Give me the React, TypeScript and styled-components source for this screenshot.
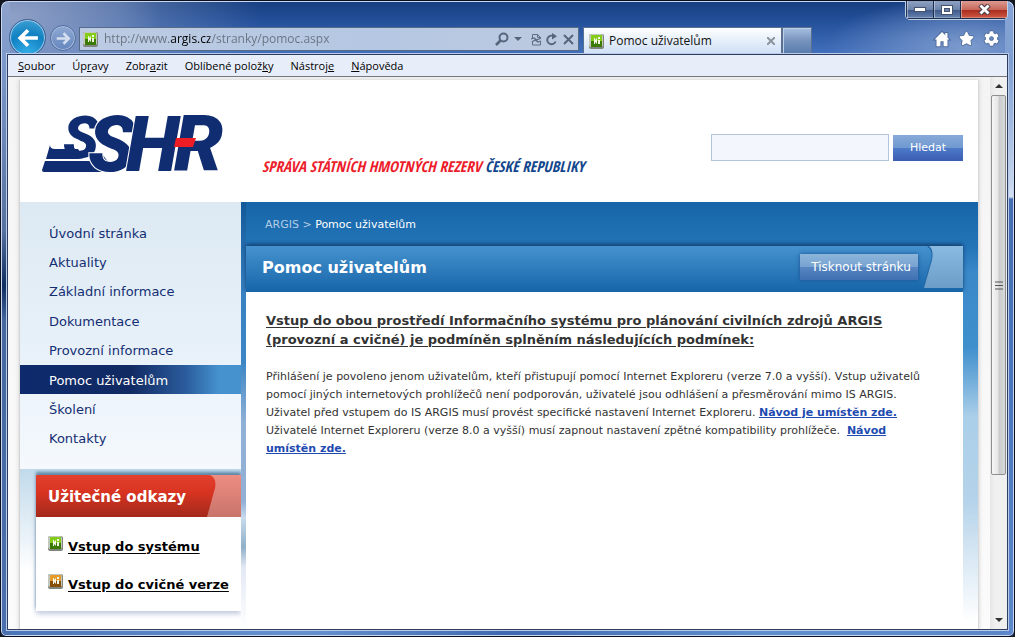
import React from "react";
import styled, { createGlobalStyle } from "styled-components";
import { FaStar, FaCog } from "react-icons/fa";

const ui = `"Open Sans", "Noto Sans", sans-serif`;
const web = `"DejaVu Sans", sans-serif`;
const narrow = `"Open Sans Condensed", "Roboto Condensed", "Liberation Sans", sans-serif`;

const GlobalStyle = createGlobalStyle`
  * { box-sizing: border-box; }
  body { margin: 0; background: #15171f; font-family: ${web}; }
  button, input { font: inherit; margin: 0; padding: 0; border: 0; background: none; color: inherit; }
  ul { list-style: none; margin: 0; padding: 0; }
  h1, h2, p { margin: 0; }
`;

/* ---------- browser window ---------- */

const Window = styled.div`
  height: 100vh;
  display: flex;
  flex-direction: column;
  padding: 0 6px 6px;
  border: 1px solid #0b1020;
  border-radius: 8px 8px 6px 6px;
  box-shadow: inset 0 0 0 1px #c9d8ef;
  background:
    linear-gradient(180deg, #86a3d4 0, #7f9fd2 60px, #c3d3ec 180px, #d4e0f2 196px, #456db3 198px, #4c77bf 400px, #5d88cb 100%) right / 9px 100% no-repeat,
    linear-gradient(180deg, #8ea3cb 0, #7d99cb 60px, #56709f 230px, #0f2d60 285px, #46689f 320px, #4c70ae 100%) left / 9px 100% no-repeat,
    linear-gradient(90deg, #4a76b9, #6592cf 30%, #3f69b0 50%, #5f8fcd 75%, #5a86c8) bottom / 100% 9px no-repeat,
    radial-gradient(140px 50px at 965px 46px, #7d9bcd, transparent),
    radial-gradient(150px 70px at 10px 16px, #8ea0c6, transparent),
    linear-gradient(90deg, #8197c299 0, #8197c288 120px, transparent 260px),
    linear-gradient(180deg, #173f80 0, #24509a 20px, #4371bd 54px);
`;

const Chrome = styled.header`
  flex: none;
  height: 53px;
  display: flex;
  align-items: flex-end;
  padding-left: 2px;
`;

const BackButton = styled.button`
  flex: none;
  width: 37px;
  height: 37px;
  margin-bottom: -2px;
  border: 1px solid #3c5f95;
  border-radius: 50%;
  background: radial-gradient(circle at 50% 100%, #35b1ea, #1181c2 55%, #3d9fd3 90%);
  box-shadow: inset 0 0 0 1px #a4cbe8;
  display: grid;
  place-items: center;
`;

const ForwardButton = styled(BackButton)`
  width: 26px;
  height: 26px;
  margin: 0 3px 3px 4px;
  border-color: #52719f;
  background: linear-gradient(#8fa9d2, #6586be);
  box-shadow: inset 0 0 0 1px #a9bedf;
`;

const AddressBar = styled.div`
  flex: 1;
  height: 24px;
  margin-bottom: 3px;
  display: flex;
  align-items: center;
  gap: 4px;
  padding: 0 3px;
  border: 1px solid #566b8a;
  background: linear-gradient(90deg, #bccbe3, #b5c7e2 60%, #bccae0);
`;

const AddressInput = styled.input`
  flex: 1;
  min-width: 0;
  height: 20px;
  padding-left: 2px;
  outline: 0;
  font: 12px/20px ${ui};
  color: transparent;
  background: linear-gradient(90deg, #68727f 68px, #000 68px, #000 108px, #68727f 108px);
  background-clip: text;
  -webkit-background-clip: text;
`;

const GlyphButton = styled.button`
  flex: none;
  width: 14px;
  height: 16px;
  display: grid;
  place-items: center;
`;

const AddressTools = styled.div`
  display: flex;
  gap: 2px;
`;

const Tab = styled.div`
  flex: none;
  width: 199px;
  height: 27px;
  margin-left: 4px;
  display: flex;
  align-items: center;
  gap: 5px;
  padding: 0 3px 0 5px;
  border: 1px solid #5b6f90;
  border-bottom: 0;
  background: linear-gradient(#fdfeff, #dce8f8 70%, #d0e0f6);
`;

const TabLabel = styled.button`
  flex: 1;
  text-align: left;
  font: 12px/20px ${ui};
  color: #111;
`;

const NewTab = styled.button`
  flex: none;
  width: 30px;
  height: 27px;
  border: 1px solid #5b6f90;
  border-bottom: 0;
  background: linear-gradient(#a7bfe0, #7592bd 50%, #587cae);
  box-shadow: inset 1px 1px 0 #bdd0ea;
`;

const Corner = styled.div`
  flex: none;
  width: 196px;
  height: 100%;
  display: flex;
  flex-direction: column;
  align-items: flex-end;
  justify-content: space-between;
`;

const WindowButtons = styled.div`
  display: flex;
  border: 1px solid #c2d0e6;
  border-top: 0;
  border-radius: 0 0 5px 5px;
  overflow: hidden;
`;

const WindowButton = styled.button<{ $close?: boolean }>`
  width: ${(p) => (p.$close ? 47 : 27)}px;
  height: 18px;
  display: grid;
  place-items: center;
  border: 1px solid #1d2f4e;
  border-width: 0 0 1px 1px;
  box-shadow: inset 1px 0 0 #ffffff66, inset 0 -1px 0 #ffffff44;
  background: ${(p) =>
    p.$close
      ? "linear-gradient(#dc9a90, #c9695c 50%, #a82a1b 52%, #cf5a45)"
      : "linear-gradient(#8fa2c2, #6d84ab 50%, #3d5887 52%, #6682b0)"};
`;

const Tools = styled.div`
  display: flex;
  gap: 8px;
  padding: 0 8px 7px 0;
`;

const ToolButton = styled.button`
  width: 17px;
  height: 17px;
  display: grid;
  place-items: center;
  color: #fff;
  svg { overflow: visible; stroke: #4d6a9b; stroke-width: 60px; paint-order: stroke; }
`;

const Frame = styled.div`
  flex: 1;
  min-height: 0;
  display: flex;
  flex-direction: column;
  border: 1px solid #2c3d60;
  box-shadow: 0 0 0 1px #b9cbe8;
  position: relative;
`;

const MenuBar = styled.nav`
  flex: none;
  height: 22px;
  display: flex;
  gap: 17px;
  padding-left: 10px;
  background: #e7eefa;
  border-bottom: 1px solid #74777c;
`;

const MenuItem = styled.button`
  font: 11px/20px ${ui};
  color: #000;
`;

const View = styled.div`
  flex: 1;
  min-height: 0;
  display: flex;
`;

const ScrollBar = styled.div`
  flex: none;
  width: 17px;
  display: flex;
  flex-direction: column;
  background: linear-gradient(90deg, #e6e6e6, #f0f0f0 30%, #efefef);
`;

const ScrollButton = styled.button`
  height: 18px;
  display: grid;
  place-items: center;
`;

const Thumb = styled.div`
  width: 15px;
  height: 380px;
  margin: 0 1px;
  display: grid;
  place-items: center;
  border: 1px solid #8f8f8f;
  border-radius: 2px;
  background: linear-gradient(90deg, #f6f6f6, #e6e6e6 45%, #c9cacc 55%, #d9dadb);
`;

const Push = styled.div`
  flex: 1;
`;

/* ---------- page ---------- */

const Page = styled.div`
  flex: 1;
  min-width: 0;
  overflow: hidden;
  display: flex;
  padding: 3px 11px 0;
  background: linear-gradient(#f4f4f4, #fbfbfb);
`;

const Sheet = styled.div`
  flex: 1;
  min-width: 0;
  display: flex;
  flex-direction: column;
  border-left: 1px solid #d4d4d4;
  border-right: 1px solid #d9d9d9;
  box-shadow: 0 0 4px #cfcfcf;
  background: #fff;
`;

const Banner = styled.header`
  flex: none;
  height: 122px;
  display: flex;
  align-items: flex-start;
  padding: 34px 15px 0 22px;
`;

const Tagline = styled.p`
  flex: 1;
  margin: 42px 0 0 36px;
  font: italic bold 15px/20px ${narrow};
  color: #ec1c2b;
  white-space: nowrap;
  b { color: #12468c; }
`;

const Search = styled.form`
  display: flex;
  gap: 4px;
  margin-top: 20px;
`;

const SearchInput = styled.input`
  width: 178px;
  height: 27px;
  padding: 0 6px;
  border: 1px solid #b1c6dc;
  background: #f3f7fd;
  font-size: 11px;
`;

const SearchButton = styled.button`
  width: 70px;
  height: 26px;
  margin-top: 1px;
  font: 11px/26px ${web};
  color: #fff;
  background: linear-gradient(#86a9d8, #7199d0 50%, #4d7bc8 50%, #3b5cb2);
`;

const Columns = styled.div`
  flex: 1;
  min-height: 0;
  display: flex;
  overflow: hidden;
`;

const Sidebar = styled.aside`
  flex: none;
  width: 221px;
  background: linear-gradient(#c1daeb 267px, #fff 370px);
`;

const NavPanel = styled.nav`
  height: 267px;
  padding-top: 16px;
  background: linear-gradient(#dde9f2, #e6f0f9 130px, #f5f9fd);
`;

const NavList = styled.ul`
  height: 235px;
  display: flex;
  flex-direction: column;
`;

const NavItem = styled.li<{ $active?: boolean }>`
  flex: 1;
  display: flex;
  align-items: center;
  padding: 1px 0 0 29px;
  font-size: 13px;
  color: ${(p) => (p.$active ? "#fff" : "#142e73")};
  background: ${(p) =>
    p.$active ? "linear-gradient(90deg, #0d2a6c, #112a63 50%, #2b5c9c 75%, #4592cf 90%)" : "none"};
  a { color: inherit; text-decoration: none; }
`;

const LinksBox = styled.section`
  margin: 6px 0 0 16px;
  height: 136px;
  background: #fff;
  box-shadow: 0 -3px 3px #5f87a6, 0 3px 5px #c3cbe0;
`;

const LinksHead = styled.div`
  height: 42px;
  display: flex;
  position: relative;
  background: linear-gradient(#ee8d82, #c8746b);
`;

const LinksTitle = styled.h2`
  position: relative;
  padding-left: 12px;
  font: bold 15px/44px ${web};
  color: #fff;
`;

const HeadShape = styled.svg`
  position: absolute;
  inset: 0 auto auto 0;
`;

const QuickLinks = styled.ul`
  display: flex;
  flex-direction: column;
  gap: 18px;
  padding: 19px 0 0 12px;
`;

const QuickLink = styled.li`
  display: flex;
  gap: 5px;
  font: bold 13px/18px ${web};
  white-space: nowrap;
  a { color: #000; padding-top: 2px; text-underline-offset: 2px; }
`;

const Main = styled.main`
  flex: 1;
  min-width: 0;
  display: flex;
  flex-direction: column;
  padding: 0 15px 0 5px;
  background:
    linear-gradient(180deg, #13599a 0, #3881c2 90px, #3c86c6 160px, #8fb0d6 220px, #93b0d4 300px, #c8dbed 316px, #8fb0c8 345px, #e3e8f5 365px, #fff) left / 5px 100% no-repeat,
    linear-gradient(180deg, #1565a8 0, #2475b8 45px, #3a88c8 70px, #3f8fcd 145px, #abcfe9 215px, #b5d3ea 300px, #d2e4f2 345px, #fff 420px);
`;

const Crumbs = styled.nav`
  flex: none;
  height: 44px;
  padding-left: 19px;
  font: 11px/45px ${web};
  color: #fff;
  a, span { color: #b3cde5; text-decoration: none; }
`;

const TitleBar = styled.div`
  flex: none;
  height: 46px;
  display: flex;
  align-items: center;
  padding-left: 16px;
  background: linear-gradient(#4592cf, #2f7cbc 50%, #1565a8);
  box-shadow: 0 -2px 4px #123f70;
`;

const Title = styled.h1`
  flex: 1;
  font: bold 16px/42px ${web};
  color: #fff;
  padding-bottom: 3px;
`;

const PrintButton = styled.button`
  width: 118px;
  height: 26px;
  margin: 0 6px 4px 0;
  padding-left: 4px;
  font: 12px/24px ${web};
  color: #fff;
  white-space: nowrap;
  background: linear-gradient(#8cb5da, #78a3d0 50%, #5886c2 50%, #4070b2);
  box-shadow: 0 0 4px #1b4f90;
`;

const TitleFold = styled.svg`
  flex: none;
  align-self: flex-start;
`;

const Article = styled.article`
  flex: 1;
  padding: 19px 40px 19px 20px;
  background: #fff;
  color: #333;
`;

const Lead = styled.h2`
  font: bold 13px/19px ${web};
  text-decoration: underline;
  text-underline-offset: 2px;
`;

const Text = styled.p`
  margin-top: 19px;
  font: 11px/18px ${web};
  a { font-weight: bold; color: #1f4bb0; }
`;

/* ---------- small drawings ---------- */

const IconSvg = styled.svg`
  flex: none;
`;

const SiteIcon = ({ tone = "green" }: { tone?: "green" | "orange" }) => {
  const [top, bottom] = tone === "green" ? ["#84cc1a", "#3c7a06"] : ["#e59a2a", "#8a4f06"];
  return (
    <IconSvg width="15" height="15" viewBox="0 0 15 15" aria-hidden="true">
      <rect width="15" height="15" rx="2" fill="#7f857c" />
      <rect width="14" height="13" rx="2" fill="#c3c8bc" />
      <rect x="2" y="1" width="11" height="7" fill={top} />
      <rect x="2" y="7" width="11" height="6" fill={bottom} />
      <path d="M5 4h1v2l2-2v6L6 8v2H5zM9 3h2v2H9zM9 6h2v4H9z" fill="#f2f7e6" />
    </IconSvg>
  );
};

const Arrow = ({ size, flip, color }: { size: number; flip?: boolean; color: string }) => (
  <svg width={size} height={size} viewBox="0 0 20 20" fill="none" stroke={color} strokeWidth="3.4" aria-hidden="true">
    {flip ? <path d="M1 10h16M10 3l7 7-7 7" /> : <path d="M19 10H3M10 3l-7 7 7 7" />}
  </svg>
);

const LogoSvg = styled.svg`
  flex: none;
  overflow: visible;
  font: italic 900 78px Roboto, "Liberation Sans", sans-serif;
`;

const Logo = () => (
  <LogoSvg width="184" height="60" viewBox="0 0 184 60" role="img" aria-label="SSHR">
    <g fill="#112d72" stroke="#fff" strokeWidth="2" paintOrder="stroke">
      <text x="21" y="44" fontSize="59">S</text>
      <path d="M8 31Q8 35 13 35H36L42 44L36 45H4Z" stroke="none" />
      <path d="M3 47H48Q56 46 60 40L74 58H2Q0 58 0 56Z" stroke="none" />
      <text x="46" y="57">S</text>
      <text x="84" y="57">H</text>
      <text x="132" y="57">R</text>
    </g>
    <path d="M134 24H154L151 33H132Z" fill="#ee1c25" />
  </LogoSvg>
);

const navItems = [
  "Úvodní stránka",
  "Aktuality",
  "Základní informace",
  "Dokumentace",
  "Provozní informace",
  "Pomoc uživatelům",
  "Školení",
  "Kontakty",
];

const menus: [string, string, string][] = [
  ["", "S", "oubor"],
  ["Úp", "r", "avy"],
  ["Zobr", "a", "zit"],
  ["Oblíbené polož", "k", "y"],
  ["Nástroj", "e", ""],
  ["", "N", "ápověda"],
];

export default function App() {
  return (
    <>
      <GlobalStyle />
      <Window>
        <Chrome>
          <BackButton aria-label="Zpět"><Arrow size={22} color="#fff" /></BackButton>
          <ForwardButton aria-label="Vpřed"><Arrow size={15} flip color="#d3deef" /></ForwardButton>
          <AddressBar>
            <SiteIcon />
            <AddressInput aria-label="Adresa" defaultValue="http://www.argis.cz/stranky/pomoc.aspx" />
            <AddressTools>
              <GlyphButton aria-label="Hledat na webu">
                <svg width="14" height="14" viewBox="0 0 14 14" fill="none" stroke="#56657c" strokeWidth="2"><circle cx="8.5" cy="5.5" r="4" /><path d="M5.5 8.5L1 13" strokeWidth="2.6" /></svg>
              </GlyphButton>
              <GlyphButton aria-label="Možnosti hledání">
                <svg width="8" height="4" viewBox="0 0 8 4"><path d="M0 0h8L4 4z" fill="#56657c" /></svg>
              </GlyphButton>
            </AddressTools>
            <AddressTools>
              <GlyphButton aria-label="Kompatibilní zobrazení">
                <svg width="11" height="13" viewBox="0 0 11 13" fill="none" stroke="#5f6e85"><path d="M1.500 5V1.500h5l3 3V5M1.500 8v4h8V8M6.500 1.500v3h3" /><path d="M0 6l3-1 3 2 4-2M1 9l3-2 3 2 3-1" strokeWidth="1.3" /></svg>
              </GlyphButton>
              <GlyphButton aria-label="Obnovit">
                <svg width="12" height="13" viewBox="0 0 12 13" fill="none" stroke="#56657c" strokeWidth="1.9"><path d="M9.6 8.5A4.3 4.3 0 1 1 7.5 3.1" /><path d="M6 0l5 3.3L6 6.4z" fill="#56657c" stroke="none" /></svg>
              </GlyphButton>
              <GlyphButton aria-label="Zastavit">
                <svg width="11" height="11" viewBox="0 0 11 11" stroke="#56657c" strokeWidth="2"><path d="M1 1l9 9M10 1l-9 9" /></svg>
              </GlyphButton>
            </AddressTools>
          </AddressBar>
          <Tab>
            <SiteIcon />
            <TabLabel>Pomoc uživatelům</TabLabel>
            <GlyphButton aria-label="Zavřít kartu">
              <svg width="8" height="8" viewBox="0 0 8 8" stroke="#8d949e" strokeWidth="2"><path d="M0 0l8 8M8 0L0 8" /></svg>
            </GlyphButton>
          </Tab>
          <NewTab aria-label="Nová karta" />
          <Corner>
            <WindowButtons>
              <WindowButton aria-label="Minimalizovat">
                <svg width="12" height="5" viewBox="0 0 12 5"><rect x=".5" y=".5" width="11" height="4" fill="#fff" stroke="#47536b" /></svg>
              </WindowButton>
              <WindowButton aria-label="Maximalizovat">
                <svg width="12" height="10" viewBox="0 0 12 10"><rect x=".5" y=".5" width="11" height="9" fill="#fff" stroke="#47536b" /><rect x="3.5" y="3.5" width="5" height="3" fill="#6d84ab" stroke="#47536b" /></svg>
              </WindowButton>
              <WindowButton aria-label="Zavřít" $close>
                <svg width="13" height="11" viewBox="0 0 13 11"><path d="M2 1l9 9M11 1l-9 9" stroke="#4d3c4b" strokeWidth="5" /><path d="M2.500 1.500l8 8M10.500 1.500l-8 8" stroke="#fff" strokeWidth="2.8" /></svg>
              </WindowButton>
            </WindowButtons>
            <Tools>
              <ToolButton aria-label="Domů">
                <svg width="16" height="16" viewBox="0 0 512 512" fill="currentColor"><path d="M256 30L20 270h60v220h125V330h102v160h125V270h60L430 205V60h-70v75Z" /></svg>
              </ToolButton>
              <ToolButton aria-label="Oblíbené"><FaStar size={15} /></ToolButton>
              <ToolButton aria-label="Nastavení"><FaCog size={15} /></ToolButton>
            </Tools>
          </Corner>
        </Chrome>
        <Frame>
          <MenuBar>
            {menus.map(([a, key, b]) => (
              <MenuItem key={a + key}>{a}<u>{key}</u>{b}</MenuItem>
            ))}
          </MenuBar>
          <View>
            <Page>
              <Sheet>
                <Banner>
                  <Logo />
                  <Tagline>SPRÁVA STÁTNÍCH HMOTNÝCH REZERV <b>ČESKÉ REPUBLIKY</b></Tagline>
                  <Search onSubmit={(e) => e.preventDefault()}>
                    <SearchInput aria-label="Hledaný výraz" />
                    <SearchButton>Hledat</SearchButton>
                  </Search>
                </Banner>
                <Columns>
                  <Sidebar>
                    <NavPanel>
                      <NavList>
                        {navItems.map((label) => (
                          <NavItem key={label} $active={label === "Pomoc uživatelům"}>
                            <a href="#">{label}</a>
                          </NavItem>
                        ))}
                      </NavList>
                    </NavPanel>
                    <LinksBox>
                      <LinksHead>
                        <HeadShape width="184" height="42" viewBox="0 0 184 42" aria-hidden="true">
                          <defs>
                            <linearGradient id="red" x1="0" y1="0" x2="0" y2="1">
                              <stop offset="0" stopColor="#e2412e" />
                              <stop offset=".4" stopColor="#d93421" />
                              <stop offset="1" stopColor="#a3291b" />
                            </linearGradient>
                          </defs>
                          <path d="M0 0H174Q181 3 179 13L171 42H0Z" fill="url(#red)" />
                        </HeadShape>
                        <LinksTitle>Užitečné odkazy</LinksTitle>
                      </LinksHead>
                      <QuickLinks>
                        <QuickLink><SiteIcon /><a href="#">Vstup do systému</a></QuickLink>
                        <QuickLink><SiteIcon tone="orange" /><a href="#">Vstup do cvičné verze</a></QuickLink>
                      </QuickLinks>
                    </LinksBox>
                  </Sidebar>
                  <Main>
                    <Crumbs><a href="#">ARGIS</a> <span>&gt;</span> Pomoc uživatelům</Crumbs>
                    <TitleBar>
                      <Title>Pomoc uživatelům</Title>
                      <PrintButton>Tisknout stránku</PrintButton>
                      <TitleFold width="39" height="42" viewBox="0 0 39 42" aria-hidden="true">
                        <defs>
                          <linearGradient id="fold" x1="0" y1="0" x2="0" y2="1">
                            <stop offset="0" stopColor="#8abae0" />
                            <stop offset="1" stopColor="#6b9dc9" />
                          </linearGradient>
                        </defs>
                        <path d="M4 0Q10 4 8 14L0 42" stroke="#2568a5" strokeWidth="2" fill="none" />
                        <path d="M5 0H39V42H0L8 14Q10 4 5 0Z" fill="url(#fold)" />
                      </TitleFold>
                    </TitleBar>
                    <Article>
                      <Lead>
                        Vstup do obou prostředí Informačního systému pro plánování civilních zdrojů ARGIS
                        (provozní a cvičné) je podmíněn splněním následujících podmínek:
                      </Lead>
                      <Text>
                        Přihlášení je povoleno jenom uživatelům, kteří přistupují pomocí Internet Exploreru (verze 7.0 a vyšší). Vstup uživatelů
                        pomocí jiných internetových prohlížečů není podporován, uživatelé jsou odhlášení a přesměrování mimo IS ARGIS.
                        <br />
                        Uživatel před vstupem do IS ARGIS musí provést specifické nastavení Internet Exploreru. <a href="#">Návod je umístěn zde.</a>
                        <br />
                        Uživatelé Internet Exploreru (verze 8.0 a vyšší) musí zapnout nastavení zpětné kompatibility prohlížeče. &nbsp;<a href="#">Návod umístěn zde.</a>
                      </Text>
                    </Article>
                  </Main>
                </Columns>
              </Sheet>
            </Page>
            <ScrollBar>
              <ScrollButton aria-label="Nahoru">
                <svg width="8" height="4" viewBox="0 0 8 4"><path d="M0 4h8L4 0z" fill="#333" /></svg>
              </ScrollButton>
              <Thumb>
                <svg width="8" height="9" viewBox="0 0 8 9" stroke="#555"><path d="M0 1h8M0 4.500h8M0 8h8" /></svg>
              </Thumb>
              <Push />
              <ScrollButton aria-label="Dolů">
                <svg width="8" height="4" viewBox="0 0 8 4"><path d="M0 0h8L4 4z" fill="#333" /></svg>
              </ScrollButton>
            </ScrollBar>
          </View>
        </Frame>
      </Window>
    </>
  );
}
